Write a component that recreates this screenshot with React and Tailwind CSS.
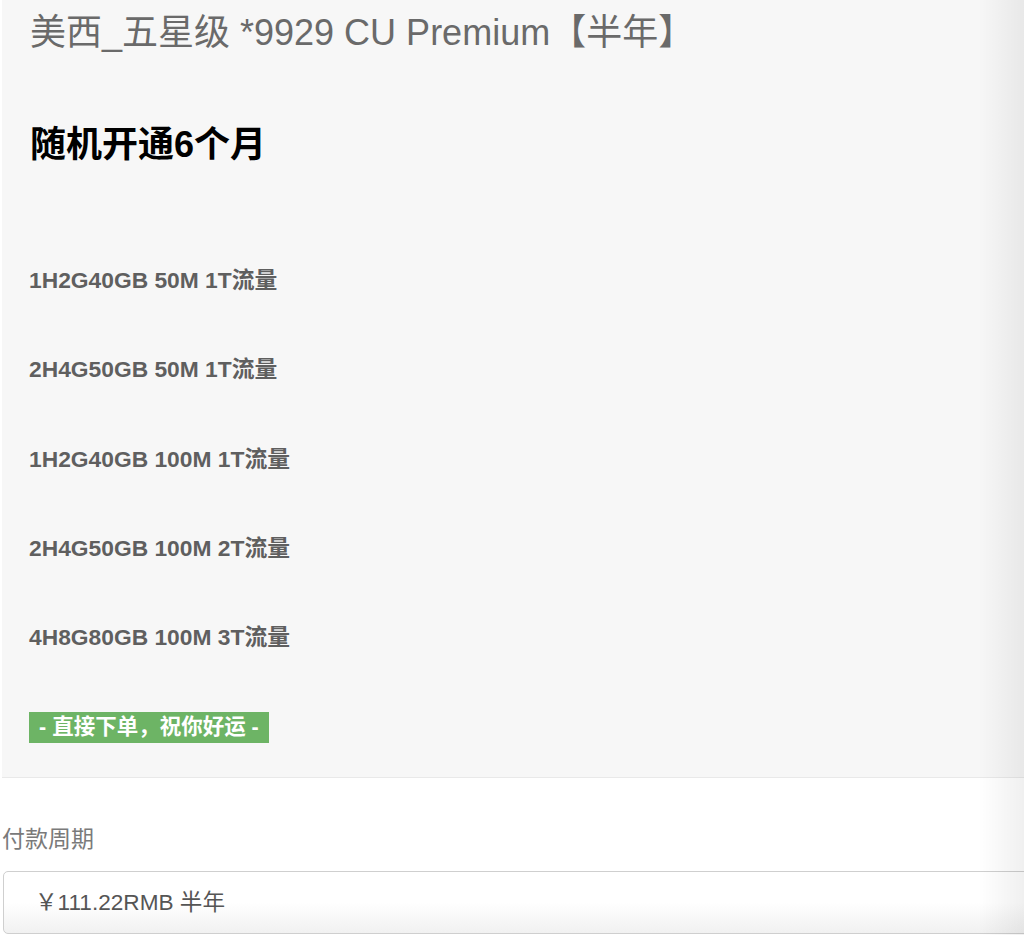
import React from "react";

const font = { fontFamily: '"Liberation Sans", "Noto Sans CJK SC", sans-serif' };

const specs = [
  "1H2G40GB 50M 1T流量",
  "2H4G50GB 50M 1T流量",
  "1H2G40GB 100M 1T流量",
  "2H4G50GB 100M 2T流量",
  "4H8G80GB 100M 3T流量",
];

export default function App() {
  return (
    <div
      className="relative w-[1024px] h-[935px] overflow-hidden bg-white"
      style={font}
    >
      <div className="w-[1070px] pl-[2px]">
        <div className="bg-[#f7f7f7] border-b border-[#e9e9e9] pl-[27px] pt-[13px] pb-[34px]">
          <h1 className="ml-[1px] text-[36px] leading-[40px] text-[#6a6a6a] font-normal whitespace-nowrap">
            美西_五星级 *9929 CU Premium【半年】
          </h1>
          <h2 className="ml-[1px] mt-[72px] text-[36px] leading-[40px] font-bold text-black">
            随机开通6个月
          </h2>
          <div className="mt-[100px] flex flex-col gap-[59.25px]">
            {specs.map((s) => (
              <p
                key={s}
                className="text-[22.8px] leading-[30px] font-bold text-[#5f5f5f] whitespace-nowrap"
              >
                {s}
              </p>
            ))}
          </div>
          <div className="mt-[60px] flex">
            <span className="inline-flex items-center h-[31px] px-[10px] bg-[#6db465] text-white text-[21.5px] font-bold leading-none whitespace-nowrap">
              - 直接下单，祝你好运 -
            </span>
          </div>
        </div>
        <div className="pt-[46px]">
          <label className="block text-[23px] leading-[30px] text-[#7a7a7a]">
            付款周期
          </label>
          <div className="mt-[17px] ml-[1px] h-[63px] border border-[#cfcfcf] rounded-[5px] bg-linear-to-b from-white via-white to-[#f1f1f1] flex items-center pl-[31px] text-[22.6px] text-[#555555] whitespace-nowrap">
            ￥111.22RMB 半年
          </div>
        </div>
      </div>
      <div className="pointer-events-none absolute top-0 right-0 h-full w-[46px] bg-linear-to-r from-black/0 to-black/[0.06]" />
    </div>
  );
}
